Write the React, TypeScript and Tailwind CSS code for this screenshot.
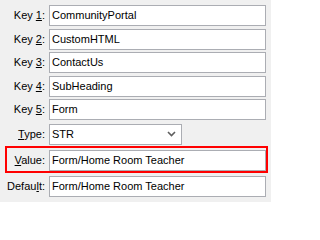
const font = { fontFamily: '"Liberation Sans", Arial, sans-serif' };

function Label({ before, accel, after }: { before: string; accel: string; after: string }) {
  return (
    <span className="whitespace-nowrap text-[11px] text-black">
      {before}
      <span className="underline underline-offset-[1px]">{accel}</span>
      {after}
    </span>
  );
}

function TextBox({ value }: { value: string }) {
  return (
    <div className="flex h-[21px] w-[217px] items-center border border-[#abadb3] bg-white pl-[2px] text-[11px] text-black">
      {value}
    </div>
  );
}

function Row({ label, children }: { label: React.ReactNode; children: React.ReactNode }) {
  return (
    <div className="flex items-center">
      <div className="flex w-[45px] justify-end">{label}</div>
      <div className="ml-[4px]">{children}</div>
    </div>
  );
}

const keys = ["CommunityPortal", "CustomHTML", "ContactUs", "SubHeading", "Form"];

export default function App() {
  return (
    <div className="h-[202px] w-[271px] bg-[#f0f0f0] pt-[5px]" style={font}>
      <div className="flex flex-col gap-[2.5px]">
        {keys.map((k, i) => (
          <Row key={k} label={<Label before="Key " accel={String(i + 1)} after=":" />}>
            <TextBox value={k} />
          </Row>
        ))}
        <div className="mt-[1px]">
          <Row label={<Label before="" accel="T" after="ype:" />}>
            <div className="flex h-[21px] w-[133px] items-center justify-between border border-[#abadb3] bg-white pl-[2px] pr-[5px] text-[11px] text-black">
              <span>STR</span>
              <svg width="9" height="6" viewBox="0 0 9 6">
                <polyline points="1,1 4.5,4.5 8,1" fill="none" stroke="#5f5f5f" strokeWidth="1.6" />
              </svg>
            </div>
          </Row>
        </div>
      </div>
      <div className="ml-[5px] mt-[1.5px] w-[263px] border-2 border-[#ff0000] pt-[2px]">
        <div className="flex items-center">
          <div className="flex w-[38px] justify-end">
            <Label before="" accel="V" after="alue:" />
          </div>
          <div className="ml-[4px]">
            <TextBox value="Form/Home Room Teacher" />
          </div>
        </div>
      </div>
      <div className="mt-[3px]">
        <Row label={<Label before="Defau" accel="l" after="t:" />}>
          <TextBox value="Form/Home Room Teacher" />
        </Row>
      </div>
    </div>
  );
}
